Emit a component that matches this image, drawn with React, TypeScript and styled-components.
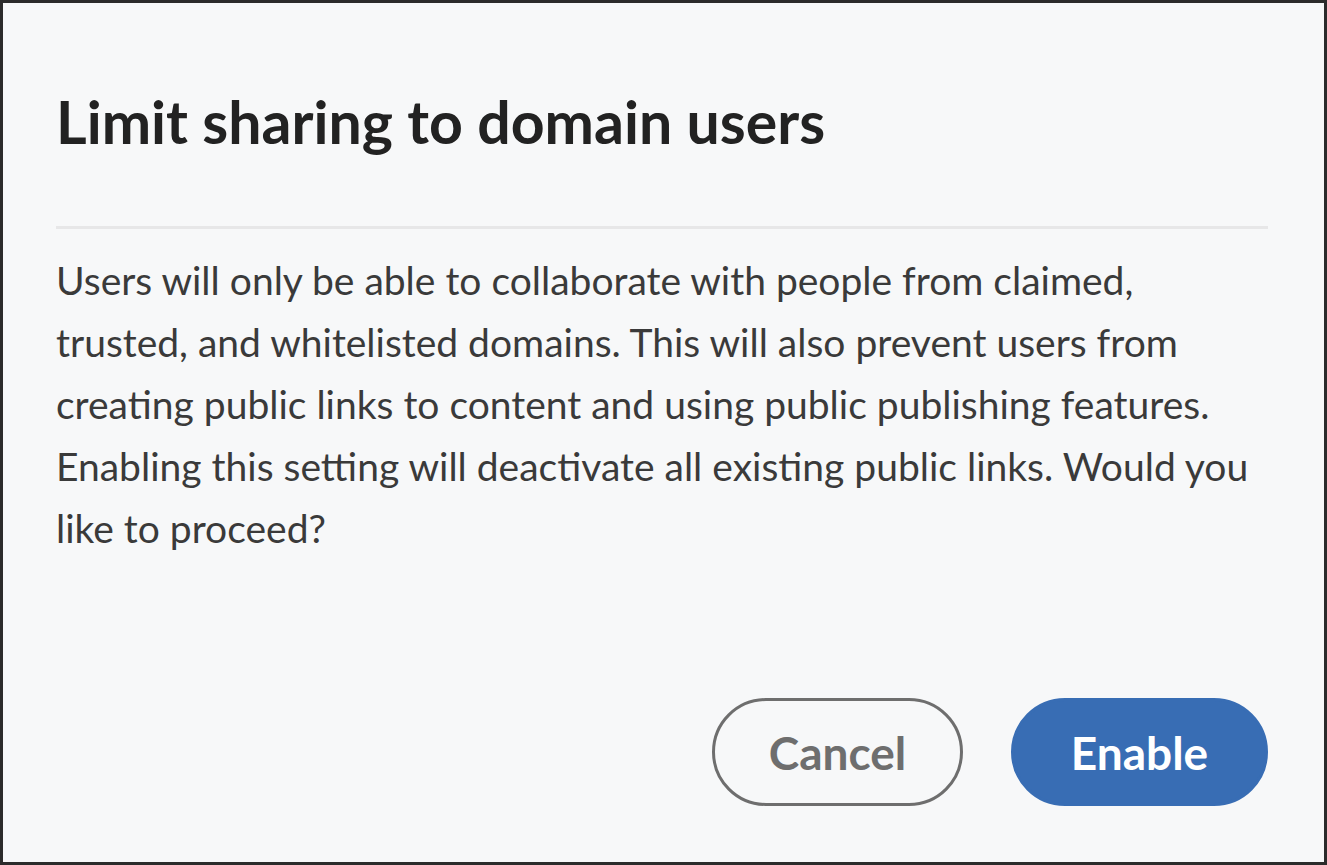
import React from "react";
import styled, { createGlobalStyle } from "styled-components";

const GlobalStyle = createGlobalStyle`
  html, body { margin: 0; padding: 0; background: #f7f8f9; }
  * { box-sizing: border-box; }
`;

const Dialog = styled.section`
  width: 1327px;
  height: 865px;
  border: 3px solid #2b2b2b;
  background: #f7f8f9;
  padding: 83px 56px 56px 53px;
  display: flex;
  flex-direction: column;
  font-family: Lato, "Open Sans", sans-serif;
`;

const Title = styled.h1`
  margin: 0;
  font-size: 59px;
  line-height: 72px;
  font-weight: 700;
  color: #222222;
`;

const Divider = styled.hr`
  margin: 68px 0 0 0;
  border: none;
  height: 3px;
  background: #e7e7e8;
`;

const Body = styled.p`
  margin: 20px 0 0 0;
  font-size: 39px;
  line-height: 62px;
  color: #3a3a3a;
`;

const Footer = styled.div`
  margin-top: auto;
  display: flex;
  justify-content: flex-end;
  gap: 48px;
`;

const PillButton = styled.button<{ $primary?: boolean }>`
  height: 108px;
  width: ${(p) => (p.$primary ? "257px" : "251px")};
  border-radius: 54px;
  font-family: Lato, "Open Sans", sans-serif;
  font-size: 46px;
  font-weight: 700;
  cursor: pointer;
  border: 3px solid ${(p) => (p.$primary ? "#386db4" : "#6e6e6e")};
  background: ${(p) => (p.$primary ? "#386db4" : "transparent")};
  color: ${(p) => (p.$primary ? "#ffffff" : "#6e6e6e")};
`;

export default function App() {
  return (
    <>
      <GlobalStyle />
      <Dialog>
        <Title>Limit sharing to domain users</Title>
        <Divider />
        <Body>
          Users will only be able to collaborate with people from claimed,
          <br />
          trusted, and whitelisted domains. This will also prevent users from
          <br />
          creating public links to content and using public publishing features.
          <br />
          Enabling this setting will deactivate all existing public links. Would you
          <br />
          like to proceed?
        </Body>
        <Footer>
          <PillButton>Cancel</PillButton>
          <PillButton $primary>Enable</PillButton>
        </Footer>
      </Dialog>
    </>
  );
}
